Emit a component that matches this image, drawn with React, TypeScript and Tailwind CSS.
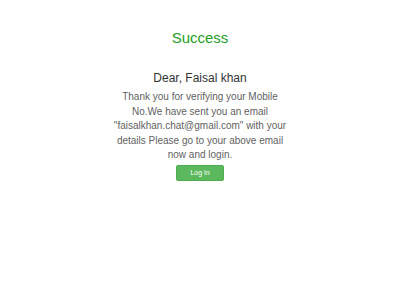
export default function App() {
  return (
    <div className="min-h-screen bg-white font-['Liberation_Sans',Arial,sans-serif] text-center">
      <div className="flex flex-col items-center pt-[29px]">
        <h3 className="text-[15px] leading-[18px] text-[#25a025]">Success</h3>
        <h4 className="mt-[23px] text-[12px] leading-[16px] text-[#333333]">Dear, Faisal khan</h4>
        <p className="mt-[4px] w-[178px] text-[10px] leading-[14.5px] text-[#5f5f5f]">
          Thank you for verifying your Mobile No.We have sent you an email "faisalkhan.chat@gmail.com" with your
          details Please go to your above email now and login.
        </p>
        <button className="mt-[2px] h-[16px] px-[13px] rounded-[2px] bg-[#5cb85c] border border-[#4cae4c] text-[7px] leading-none text-white">
          Log in
        </button>
      </div>
    </div>
  );
}
